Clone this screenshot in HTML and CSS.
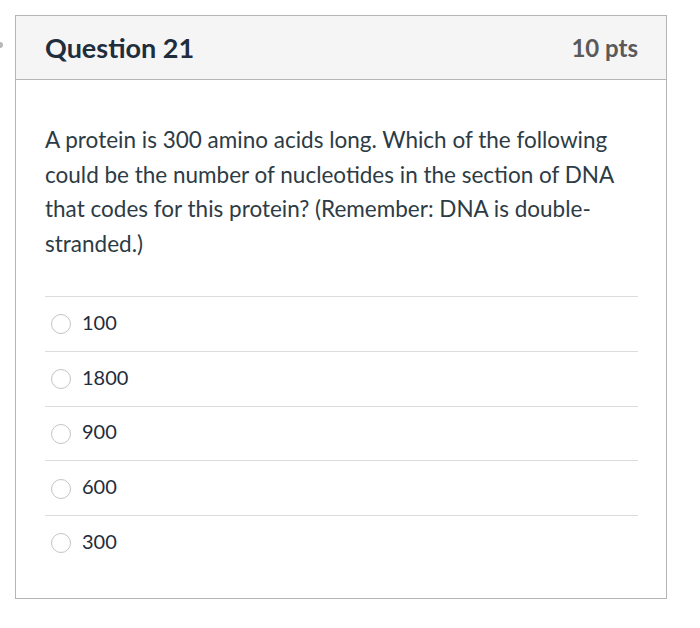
FILE: index.html
```html
<!DOCTYPE html>
<html>
<head>
<meta charset="utf-8">
<link rel="stylesheet" href="styles.css">
</head>
<body>
<span class="edge-dot"></span>
<div class="card">
  <div class="header">
    <span class="title">Question 21</span>
    <span class="pts">10 pts</span>
  </div>
  <div class="body">
    <p class="question">A protein is 300 amino acids long. Which of the following could be the number of nucleotides in the section of DNA that codes for this protein? (Remember: DNA is double-stranded.)</p>
    <div class="answers">
      <div class="answer"><span class="radio"></span><span class="label">100</span></div>
      <div class="answer"><span class="radio"></span><span class="label">1800</span></div>
      <div class="answer"><span class="radio"></span><span class="label">900</span></div>
      <div class="answer"><span class="radio"></span><span class="label">600</span></div>
      <div class="answer"><span class="radio"></span><span class="label">300</span></div>
    </div>
  </div>
</div>
</body>
</html>
```
FILE: styles.css
```css
html, body {
  margin: 0;
  padding: 0;
  background: #ffffff;
  font-family: Lato, "Liberation Sans", sans-serif;
}
body {
  padding: 15px 0 0 15px;
  width: 700px;
  height: 628px;
  box-sizing: border-box;
  position: relative;
}
.edge-dot {
  position: absolute;
  left: -3px;
  top: 42px;
  width: 6px;
  height: 6px;
  border-radius: 50%;
  background: #b8b8b8;
}
.card {
  width: 652px;
  height: 584px;
  box-sizing: border-box;
  border: 1px solid #b5b5b5;
  display: flex;
  flex-direction: column;
}
.header {
  height: 64px;
  box-sizing: border-box;
  background: #f5f5f5;
  border-bottom: 1px solid #b5b5b5;
  display: flex;
  align-items: center;
  justify-content: space-between;
  padding: 0 28px 0 29px;
}
.title {
  font-size: 27px;
  font-weight: 700;
  color: #1f2d3d;
}
.pts {
  font-size: 24px;
  font-weight: 700;
  color: #5a5a5a;
}
.body {
  padding: 43px 28px 0 29px;
}
.question {
  margin: 0;
  font-size: 22.5px;
  line-height: 34.5px;
  color: #2d3b45;
}
.answers {
  margin-top: 35px;
}
.answer {
  border-top: 1px solid #dcdcdc;
  height: 54.75px;
  box-sizing: border-box;
  display: flex;
  align-items: center;
  padding-left: 6px;
}
.radio {
  width: 20px;
  height: 20px;
  border: 1px solid #c4c4c4;
  border-radius: 50%;
  box-sizing: border-box;
  background: #fff;
  margin-right: 11px;
  margin-top: 1px;
}
.label {
  font-size: 20px;
  color: #1f2d3d;
  margin-bottom: 4px;
}
```
